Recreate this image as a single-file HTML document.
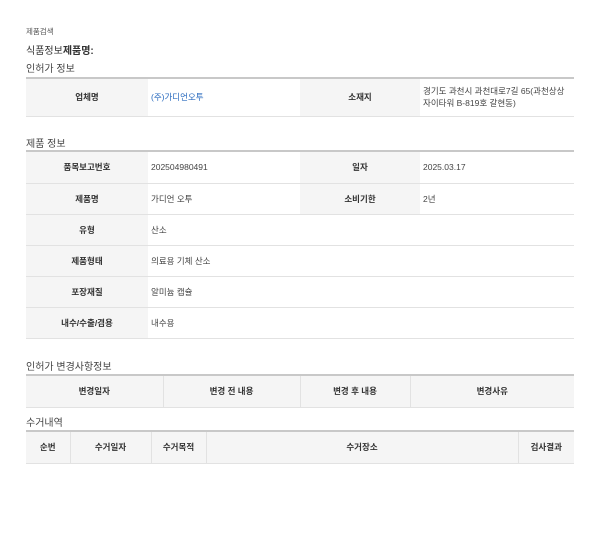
<!DOCTYPE html>
<html><head><meta charset="utf-8"><style>
*{margin:0;padding:0;box-sizing:border-box}
body{width:600px;height:536px;background:#fff;font-family:"Liberation Sans","Noto Sans CJK KR",sans-serif;color:#333;position:relative;overflow:hidden}
.t{position:absolute;white-space:nowrap}
table{position:absolute;left:26px;width:548px;border-collapse:collapse;font-size:8.5px;border-top:2px solid #c8c8c8}
th{background:#f5f5f5;font-weight:bold;color:#333;text-align:center;border-bottom:1px solid #e2e2e2}
td{border-bottom:1px solid #e2e2e2;padding-left:3px;color:#444}
.h th{border-left:1px solid #e2e2e2}
.h th:first-child{border-left:none}
</style></head><body>
<div class="t" style="left:26px;top:26px;font-size:7.5px;color:#555">제품검색</div>
<div class="t" style="left:26px;top:42px;font-size:10px;color:#333">식품정보<b>제품명:</b></div>
<div class="t" style="left:26px;top:60px;font-size:10px;color:#444">인허가 정보</div>
<table style="top:77px;table-layout:fixed">
<colgroup><col style="width:122px"><col style="width:152px"><col style="width:120px"><col></colgroup>
<tr style="height:38px"><th>업체명</th><td style="color:#2a6bbf">(주)가디언오투</td><th>소재지</th><td style="line-height:12px">경기도 과천시 과천대로7길 65(과천상상<br>자이타워 B-819호 갈현동)</td></tr>
</table>
<div class="t" style="left:26px;top:135px;font-size:10px;color:#444">제품 정보</div>
<table style="top:150px;table-layout:fixed">
<colgroup><col style="width:122px"><col style="width:152px"><col style="width:120px"><col></colgroup>
<tr style="height:32px"><th>품목보고번호</th><td>202504980491</td><th>일자</th><td>2025.03.17</td></tr>
<tr style="height:31px"><th>제품명</th><td>가디언 오투</td><th>소비기한</th><td>2년</td></tr>
<tr style="height:31px"><th>유형</th><td colspan="3">산소</td></tr>
<tr style="height:31px"><th>제품형태</th><td colspan="3">의료용 기체 산소</td></tr>
<tr style="height:31px"><th>포장재질</th><td colspan="3">알미늄 캡슐</td></tr>
<tr style="height:31px"><th>내수/수출/겸용</th><td colspan="3">내수용</td></tr>
</table>
<div class="t" style="left:26px;top:358px;font-size:10px;color:#444">인허가 변경사항정보</div>
<table class="h" style="top:374px;table-layout:fixed">
<colgroup><col style="width:137px"><col style="width:137px"><col style="width:110px"><col></colgroup>
<tr style="height:32px"><th>변경일자</th><th>변경 전 내용</th><th>변경 후 내용</th><th>변경사유</th></tr>
</table>
<div class="t" style="left:26px;top:414px;font-size:10px;color:#444">수거내역</div>
<table class="h" style="top:430px;table-layout:fixed">
<colgroup><col style="width:44px"><col style="width:81px"><col style="width:55px"><col style="width:312px"><col></colgroup>
<tr style="height:32px"><th>순번</th><th>수거일자</th><th>수거목적</th><th>수거장소</th><th>검사결과</th></tr>
</table>
</body></html>
